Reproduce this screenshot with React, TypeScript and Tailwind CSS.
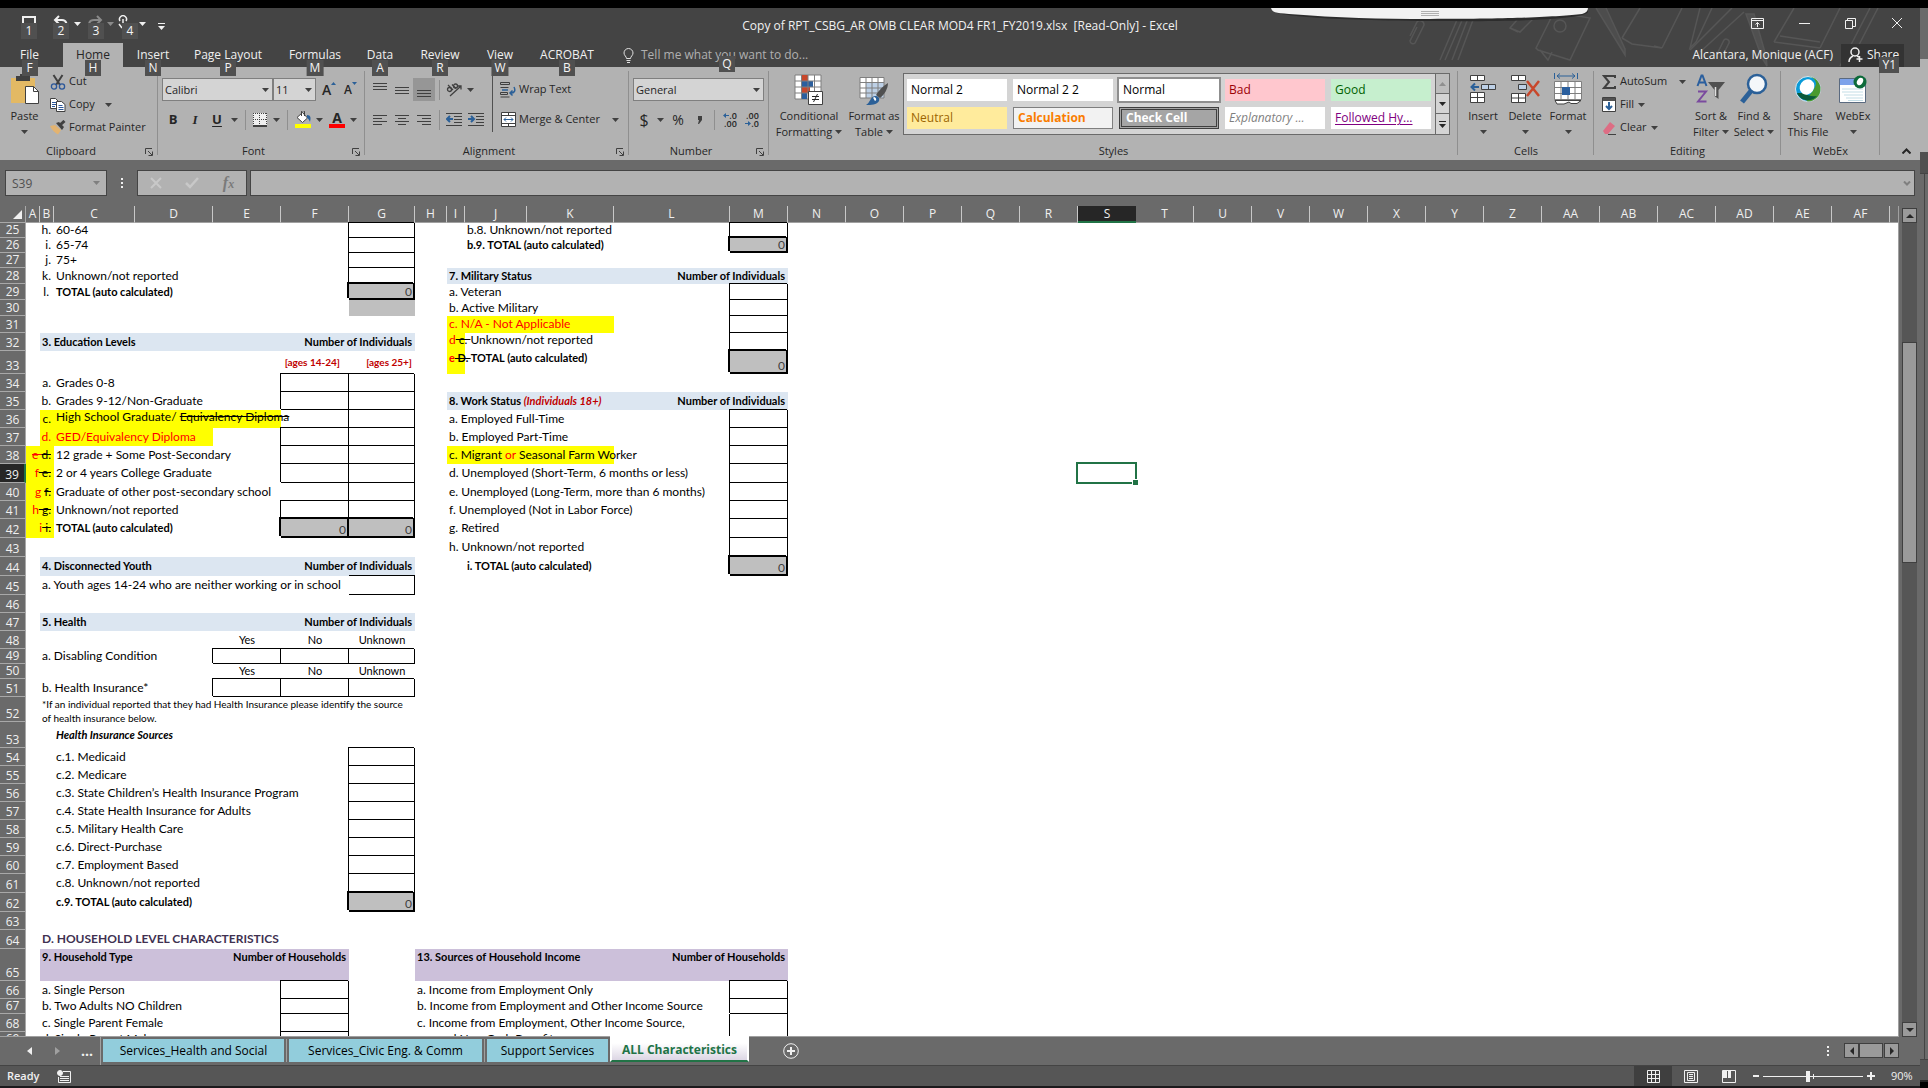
import type { ReactNode } from "react";
import clsx from "clsx";

/* ---------- sheet data ---------- */

type Cell = {
  at: string;
  span?: number;
  text?: ReactNode;
  cls?: string;
};

type Row = { n: number; h: number; cells?: Cell[] };

const columns = [
  { id: "A", w: 14 },
  { id: "B", w: 14 },
  { id: "C", w: 81 },
  { id: "D", w: 78 },
  { id: "E", w: 68 },
  { id: "F", w: 68 },
  { id: "G", w: 66 },
  { id: "H", w: 32 },
  { id: "I", w: 18 },
  { id: "J", w: 62 },
  { id: "K", w: 87 },
  { id: "L", w: 116 },
  { id: "M", w: 58 },
  ...["N", "O", "P", "Q", "R", "S", "T", "U", "V", "W", "X", "Y", "Z", "AA", "AB", "AC", "AD", "AE", "AF"].map((id) => ({ id, w: 58 }))
];

const colIndex = (id: string) => columns.findIndex((c) => c.id === id);

const BOX = "shadow-[-1px_-1px_0_#000,inset_-1px_-1px_0_#000]";
const BOX_OPEN_LEFT = "shadow-[0_-1px_0_#000,inset_-1px_-1px_0_#000]";
const BOX_SIDES = "shadow-[-1px_0_0_#000,inset_-1px_0_0_#000]";
const TOTAL = "bg-[#bfbfbf] text-right align-bottom pr-[3px] text-[#404040] shadow-[-2px_-2px_0_#000,inset_-2px_-2px_0_#000]";
const BLUE = "bg-[#dce6f1] font-bold text-[11px]";
const PURPLE = "bg-[#ccc0da] font-bold text-[11px] align-top pt-px";
const BOLD = "font-bold text-[11px]";
const YELLOW = "bg-[#ffff00]";

const box = (at: string): Cell => ({ at, cls: BOX });
const total = (at: string): Cell => ({ at, cls: TOTAL, text: "0" });
const bullet = (t: ReactNode, cls = ""): Cell => ({ at: "B", text: t, cls: clsx("text-right pr-[3px]", cls) });
const label = (at: string, t: ReactNode, cls = ""): Cell => ({ at, text: t, cls: clsx("pl-[2px]", cls) });
const renumbered = (now: ReactNode, was: string): Cell => ({
  at: "A",
  span: 2,
  cls: clsx("text-right pr-[3px]", YELLOW),
  text: (
    <>
      <span className="text-[#ff0000]">{now}</span>
      <s>{was}</s>
    </>
  )
});

function title(at: string, span: number, t: ReactNode, rightAt: string, right: string, cls = BLUE): Cell[] {
  return [
    { at, span, text: t, cls: clsx("pl-[2px]", cls) },
    { at: rightAt, span: 2, text: right, cls: clsx("text-right pr-[3px]", cls) }
  ];
}

const headings = ["Yes", "No", "Unknown"].map((t, i) => ({ at: "EFG"[i], text: t, cls: "text-center text-[11px]" }));

const rows: Row[] = [
  { n: 25, h: 15, cells: [bullet("h."), label("C", "60-64"), box("G"), label("J", "b.8. Unknown/not reported"), box("M")] },
  { n: 26, h: 15, cells: [bullet("i."), label("C", "65-74"), box("G"), label("J", "b.9. TOTAL (auto calculated)", BOLD), total("M")] },
  { n: 27, h: 15, cells: [bullet("j."), label("C", "75+"), box("G")] },
  { n: 28, h: 16, cells: [bullet("k."), label("C", "Unknown/not reported"), box("G"), ...title("I", 3, "7. Military Status", "L", "Number of Individuals")] },
  { n: 29, h: 16, cells: [bullet("l.", "pr-[5px]"), label("C", "TOTAL (auto calculated)", BOLD), total("G"), label("I", "a. Veteran"), box("M")] },
  { n: 30, h: 16, cells: [{ at: "G", cls: "bg-[#bfbfbf]" }, label("I", "b. Active Military"), box("M")] },
  { n: 31, h: 17, cells: [{ at: "I", span: 3, text: "c. N/A - Not Applicable", cls: clsx("pl-[2px] text-[#ff0000]", YELLOW) }, box("M")] },
  {
    n: 32,
    h: 18,
    cells: [
      ...title("B", 4, "3. Education Levels", "F", "Number of Individuals"),
      label("I", <><span className="text-[#ff0000]">d</span><s> c. </s>Unknown/not reported</>, clsx("align-top", YELLOW)),
      box("M")
    ]
  },
  {
    n: 33,
    h: 23,
    cells: [
      { at: "F", text: "[ages 14-24]", cls: "text-right pr-[9px] font-bold text-[10px] text-[#c00000]" },
      { at: "G", text: "[ages 25+]", cls: "text-right pr-[3px] font-bold text-[10px] text-[#c00000]" },
      label("I", <><span className="text-[#ff0000]">e</span><s> D. </s>TOTAL (auto calculated)</>, clsx("align-top", BOLD, YELLOW)),
      total("M")
    ]
  },
  { n: 34, h: 18, cells: [bullet("a."), label("C", "Grades 0-8"), box("F"), box("G")] },
  {
    n: 35,
    h: 18,
    cells: [
      bullet("b."),
      label("C", "Grades 9-12/Non-Graduate"),
      box("F"),
      box("G"),
      ...title("I", 3, <>8. Work Status <i className="text-[#c00000]">(Individuals 18+)</i></>, "L", "Number of Individuals")
    ]
  },
  {
    n: 36,
    h: 18,
    cells: [
      bullet("c.", YELLOW),
      { at: "C", span: 3, text: <>High School Graduate/ <s>Equivalency Diploma</s></>, cls: clsx("pl-[2px] align-top", YELLOW) },
      box("G"),
      label("I", "a. Employed Full-Time"),
      box("M")
    ]
  },
  {
    n: 37,
    h: 18,
    cells: [
      bullet("d.", clsx("text-[#ff0000]", YELLOW)),
      { at: "C", span: 2, text: "GED/Equivalency Diploma", cls: clsx("pl-[2px] text-[#ff0000]", YELLOW) },
      box("F"),
      box("G"),
      label("I", "b. Employed Part-Time"),
      box("M")
    ]
  },
  {
    n: 38,
    h: 18,
    cells: [
      renumbered(<s>e </s>, "d."),
      label("C", "12 grade + Some Post-Secondary"),
      box("F"),
      box("G"),
      { at: "I", span: 3, text: <>c. Migrant <span className="text-[#ff0000]">or</span> Seasonal Farm Worker</>, cls: clsx("pl-[2px]", YELLOW) },
      box("M")
    ]
  },
  {
    n: 39,
    h: 19,
    cells: [renumbered("f", " e."), label("C", "2 or 4 years College Graduate"), box("F"), box("G"), label("I", "d. Unemployed (Short-Term, 6 months or less)"), box("M"), { at: "S", cls: "relative", text: <Selection /> }]
  },
  { n: 40, h: 18, cells: [renumbered("g ", "f."), label("C", "Graduate of other post-secondary school"), box("G"), label("I", "e. Unemployed (Long-Term, more than 6 months)"), box("M")] },
  { n: 41, h: 18, cells: [renumbered("h", " g."), label("C", "Unknown/not reported"), box("F"), box("G"), label("I", "f. Unemployed (Not in Labor Force)"), box("M")] },
  { n: 42, h: 19, cells: [renumbered("i", " i."), label("C", "TOTAL (auto calculated)", BOLD), total("F"), total("G"), label("I", "g. Retired"), box("M")] },
  { n: 43, h: 19, cells: [label("I", "h. Unknown/not reported"), box("M")] },
  { n: 44, h: 19, cells: [...title("B", 4, "4. Disconnected Youth", "F", "Number of Individuals"), label("J", "i. TOTAL (auto calculated)", BOLD), total("M")] },
  { n: 45, h: 19, cells: [label("B", "a. Youth ages 14-24 who are neither working or in school"), { at: "G", cls: BOX_OPEN_LEFT }] },
  { n: 46, h: 18 },
  { n: 47, h: 18, cells: title("B", 4, "5. Health", "F", "Number of Individuals") },
  { n: 48, h: 18, cells: headings },
  { n: 49, h: 15, cells: [label("B", "a. Disabling Condition"), box("E"), box("F"), box("G")] },
  { n: 50, h: 15, cells: headings },
  { n: 51, h: 18, cells: [label("B", "b. Health Insurance*"), box("E"), box("F"), box("G")] },
  {
    n: 52,
    h: 25,
    cells: [
      {
        at: "B",
        span: 6,
        cls: "align-top pl-[2px] text-[10px]",
        text: (
          <div className="h-6">
            *If an individual reported that they had Health Insurance please identify the source
            <br />
            of health insurance below.
          </div>
        )
      }
    ]
  },
  { n: 53, h: 26, cells: [label("C", "Health Insurance Sources", clsx("italic", BOLD))] },
  ...["c.1. Medicaid", "c.2. Medicare", "c.3. State Children’s Health Insurance Program", "c.4. State Health Insurance for Adults", "c.5. Military Health Care", "c.6. Direct-Purchase", "c.7. Employment Based", "c.8. Unknown/not reported"].map((t, i) => ({
    n: 54 + i,
    h: i === 7 ? 19 : 18,
    cells: [label("C", t), box("G")]
  })),
  { n: 62, h: 19, cells: [label("C", "c.9. TOTAL (auto calculated)", BOLD), total("G")] },
  { n: 63, h: 18 },
  { n: 64, h: 19, cells: [label("B", "D. HOUSEHOLD LEVEL CHARACTERISTICS", "font-bold text-[12px] text-[#403151]")] },
  {
    n: 65,
    h: 32,
    cells: [...title("B", 3, "9. Household Type", "E", "Number of Households", PURPLE), ...title("H", 4, "13. Sources of Household Income", "L", "Number of Households", PURPLE)]
  },
  { n: 66, h: 18, cells: [label("B", "a. Single Person"), box("F"), label("H", "a. Income from Employment Only"), box("M")] },
  { n: 67, h: 15, cells: [label("B", "b. Two Adults NO Children"), box("F"), label("H", "b. Income from Employment and Other Income Source"), box("M")] },
  { n: 68, h: 18, cells: [label("B", "c. Single Parent Female"), box("F"), label("H", "c. Income from Employment, Other Income Source,"), { at: "M", cls: BOX_SIDES }] },
  { n: 69, h: 15, cells: [label("B", "d. Single Parent Male"), box("F"), { at: "H", text: "and Non-Cash Benefits", cls: "pl-[22px]" }, { at: "M", cls: BOX_SIDES }] }
];

function Selection() {
  return (
    <span className="absolute -left-[2px] -top-[2px] -right-px -bottom-px border-2 border-[#217346]">
      <span className="absolute -bottom-[3px] -right-[3px] h-[6px] w-[6px] border-l border-t border-white bg-[#217346]" />
    </span>
  );
}

/* ---------- small parts ---------- */

function Caret({ className = "text-[#404040]" }: { className?: string }) {
  return (
    <svg width="7" height="4" viewBox="0 0 7 4" className={clsx("shrink-0", className)}>
      <path d="M0 0h7L3.5 4z" fill="currentColor" />
    </svg>
  );
}

function KeyTip({ children, className }: { children: ReactNode; className?: string }) {
  return (
    <span className={clsx("absolute z-10 grid h-4 min-w-4 place-items-center bg-[#505050] px-[3px] text-xs leading-4 text-[#f5f5f5]", className)}>
      {children}
    </span>
  );
}

function Launcher() {
  return (
    <button aria-label="More options" className="absolute right-[5px] top-[7px]">
      <svg width="8" height="8" viewBox="0 0 8 8" fill="none" stroke="#404040">
        <path d="M.5 6V.5H7M3 3l4 4M7.5 3.5v4h-4" />
      </svg>
    </button>
  );
}

function Group({ name, width, children, launcher, className }: { name: string; width: string; children: ReactNode; launcher?: boolean; className?: string }) {
  return (
    <section aria-label={name} className={clsx("relative flex shrink-0 flex-col pt-[3px]", width)}>
      <div className={clsx("flex h-[71px]", className)}>{children}</div>
      <div className={clsx("relative h-[19px] text-center leading-5", launcher && "pr-4")}>
        {name}
        {launcher && <Launcher />}
      </div>
      <span className="absolute bottom-[5px] right-0 top-1 w-px bg-[#8f8f8f]" />
    </section>
  );
}

function BigButton({ icon, lines, width, caret }: { icon: ReactNode; lines: string[]; width: string; caret?: boolean }) {
  return (
    <button className={clsx("flex shrink-0 flex-col items-center pt-[3px]", width)}>
      <span className="grid h-8 place-items-center">{icon}</span>
      <span className="mt-[3px] whitespace-nowrap leading-4">{lines[0]}</span>
      <span className="flex h-4 items-center gap-[3px] whitespace-nowrap leading-4">
        {lines[1]}
        {caret && <Caret />}
      </span>
    </button>
  );
}

function SmallButton({ icon, text, caret, gap = "ml-3" }: { icon: ReactNode; text: string; caret?: boolean; gap?: string }) {
  return (
    <button className="flex h-[23px] items-center whitespace-nowrap">
      <span className="grid w-[18px] place-items-center">{icon}</span>
      <span className="ml-[2px]">{text}</span>
      {caret && <span className={gap}><Caret /></span>}
    </button>
  );
}

function IconButton({ label, width, active, children }: { label: string; width: string; active?: boolean; children: ReactNode }) {
  return (
    <button aria-label={label} className={clsx("grid h-[23px] shrink-0 place-items-center", width, active && "bg-[#969696]")}>
      {children}
    </button>
  );
}

const Divider = ({ className = "h-5 bg-[#8f8f8f]" }: { className?: string }) => <span className={clsx("w-px shrink-0", className)} />;

function Lines({ widths, align, y }: { widths: number[]; align: "left" | "center" | "right"; y: number }) {
  return (
    <svg width="14" height="14" viewBox="0 0 14 14" stroke="#404040">
      {widths.map((w, i) => {
        const x = align === "left" ? 0 : align === "center" ? (14 - w) / 2 : 14 - w;
        return <path key={i} d={`M${x} ${y + i * 3 + 0.5}h${w}`} />;
      })}
    </svg>
  );
}

function DropBox({ label, value, width }: { label: string; value: string; width: string }) {
  return (
    <span className={clsx("relative flex h-[23px] items-center border border-[#7f7f7f] bg-[#d4d4d4]", width)}>
      <select aria-label={label} className="h-full w-full appearance-none bg-transparent pl-[2px] leading-4 text-[#262626] outline-none">
        <option>{value}</option>
      </select>
      <span className="pointer-events-none absolute right-[3px]"><Caret /></span>
    </span>
  );
}

/* ---------- icons ---------- */

const PasteIcon = () => (
  <svg width="30" height="30" viewBox="0 0 30 30">
    <path d="M1 4h24v25H1z" fill="#e3b964" />
    <path d="M6 2h4V0h6v2h4v5H6z" fill="#404040" />
    <path d="M15.500 12.500h8l5 5v12h-13z" fill="#fff" stroke="#404040" />
    <path d="M23.500 12.500v5h5" fill="none" stroke="#404040" />
  </svg>
);

const CutIcon = () => (
  <svg width="16" height="16" viewBox="0 0 16 16" fill="none">
    <path d="M3.500 1l6.500 10M12.500 1L6 11" stroke="#404040" strokeWidth="2" />
    <circle cx="4" cy="12.500" r="2.600" stroke="#2b579a" strokeWidth="1.300" />
    <circle cx="12" cy="12.500" r="2.600" stroke="#2b579a" strokeWidth="1.300" />
  </svg>
);

const CopyIcon = () => (
  <svg width="16" height="15" viewBox="0 0 16 15" fill="#fff" stroke="#404040">
    <path d="M.5 1.500h5l3 3v7h-8z" />
    <path d="M2 5.500h4M2 7.500h4M2 9.500h3" stroke="#2b579a" />
    <path d="M6.500 4.500h5l3.500 3v7H6.500z" />
    <path d="M8.500 8.500h4M8.500 10.500h5M8.500 12.500h5" stroke="#2b579a" />
  </svg>
);

const PainterIcon = () => (
  <svg width="16" height="15" viewBox="0 0 16 15">
    <path d="M0 6l5-1 6 5-3 4.500C5 13 2 10 0 6z" fill="#e3b370" />
    <path d="M6 3l3-1 5 5-2 3z" fill="#404040" />
    <path d="M10 5l4.500-4" stroke="#404040" strokeWidth="3" />
  </svg>
);

const BorderIcon = () => (
  <svg width="14" height="14" viewBox="0 0 14 14">
    <path d="M0 0h14v12H0z" fill="#f0f0f0" />
    <path d="M0 .5h14M0 6.500h14M.5 0v12M6.500 0v12M13.500 0v12" stroke="#404040" strokeDasharray="1 1" />
    <path d="M0 13h14" stroke="#404040" strokeWidth="2" />
  </svg>
);

const FillIcon = () => (
  <svg width="17" height="17" viewBox="0 0 17 17">
    <path d="M2 6.500L7.500 1.500l5 5.500-5 4.500z" fill="#fff" stroke="#404040" />
    <path d="M6.500 5V1a1.500 1.500 0 013 0v4" fill="none" stroke="#404040" />
    <path d="M12 4c4 0 4 3 3 7-1-2-1-3-3-4z" fill="#2b6098" />
    <path d="M0 13h16v4H0z" fill="#ff0" />
  </svg>
);

const OrientIcon = () => (
  <svg width="16" height="16" viewBox="0 0 16 16" fill="none" stroke="#404040" strokeWidth="1.300">
    <circle cx="3.500" cy="7.500" r="2" />
    <path d="M2 3l5 5M6 2.500l4 4" />
    <circle cx="9.500" cy="4" r="2" />
    <path d="M4 14L15 4M11.500 4H15v3.500" />
  </svg>
);

const Indent = ({ out }: { out?: boolean }) => (
  <svg width="16" height="13" viewBox="0 0 16 13">
    <path d="M0 .5h16M8 3.500h8M8 6.500h8M8 9.500h8M0 12.500h16" stroke="#404040" />
    <path d={out ? "M7 6H2M4 3L1 6l3 3" : "M0 6h5M3 3l3 3-3 3"} stroke="#2b6098" strokeWidth="2" fill="none" />
  </svg>
);

const WrapIcon = () => (
  <svg width="16" height="16" viewBox="0 0 16 16" fill="none">
    <path d="M.5.5h9v2h-9zM.5 5.500h8M.5 10.500h7v2h-7zM.5 15h9" stroke="#404040" />
    <path d="M2 8h6" stroke="#2b6098" strokeWidth="1.500" />
    <path d="M14 5c2 4 0 6-3 6M12.500 8.500L10 11l2.500 2.500" stroke="#2b6098" strokeWidth="1.500" />
  </svg>
);

const MergeIcon = () => (
  <svg width="15" height="15" viewBox="0 0 15 15" fill="#fff" stroke="#404040">
    <path d="M.5.5h14v14H.5zM.5 3.500h14M.5 11.500h14M7.500.5v3M7.500 11.500v3" />
    <path d="M3 7.500h9M5 5.500l-2 2 2 2M10 5.500l2 2-2 2" stroke="#2b6098" fill="none" />
  </svg>
);

const CondIcon = () => (
  <svg width="30" height="31" viewBox="0 0 30 31">
    <path d="M1 1h26v24H1z" fill="#fff" stroke="#7f7f7f" />
    <path d="M8 1h6v6H8zM8 13h8v6H8z" fill="#c8472b" />
    <path d="M8 7h11v6H8zM8 19h5v6H8z" fill="#2b5f9e" />
    <path d="M1 7h26M1 13h26M1 19h26M7.500 1v24M14 1v24M20.500 1v24" stroke="#7f7f7f" fill="none" />
    <path d="M14.500 17.500h14v13h-14z" fill="#fff" stroke="#404040" />
    <path d="M18 22.500h7M18 25.500h7M23.500 20l-4 8" stroke="#262626" />
  </svg>
);

const TableIcon = () => (
  <svg width="30" height="31" viewBox="0 0 30 31">
    <path d="M1 3h24v21H1z" fill="#fff" />
    <path d="M7 8h18v16H7z" fill="#bdd0e6" />
    <path d="M1 3.500h24V24H1zM1 8.500h24M1 14h24M1 19h24M7 3v21M13 3v21M19 3v21" fill="none" stroke="#7f7f7f" />
    <path d="M29 9c0 6-4 12-8 15l-4-3c3-5 7-9 12-12z" fill="#505050" />
    <path d="M16 22c3 0 5 2 4 5-2 4-8 4-13 4 4-2 4-8 9-9z" fill="#2b6098" />
    <path d="M14.500 24c1.500 0 2 1 1.500 2.500" stroke="#fff" strokeWidth="2" fill="none" />
  </svg>
);

const InsertIcon = () => (
  <svg width="28" height="30" viewBox="0 0 28 30" fill="#fff" stroke="#404040">
    <path d="M1.500 1.500h14v5h-14zM8.500 1.500v5M1.500 18.500h14v10h-14zM8.500 18.500v10M1.500 23.500h14" />
    <path d="M12.500 10.500h14v5h-14zM19.500 10.500v5" fill="#bdd0e6" />
    <path d="M10 13H3M6 9.500L2.500 13 6 16.500" stroke="#2b6098" strokeWidth="2" fill="none" />
  </svg>
);

const DeleteIcon = () => (
  <svg width="30" height="30" viewBox="0 0 30 30" fill="#fff" stroke="#404040">
    <path d="M1.500 1.500h14v5h-14zM8.500 1.500v5M1.500 19.500h14v9h-14zM8.500 19.500v9M1.500 24h14" />
    <path d="M8.500 10.500h8v5h-8z" fill="#bdd0e6" />
    <path d="M17 7l12 15M29 7L17 22" stroke="#c8472b" strokeWidth="2.500" />
  </svg>
);

const FormatIcon = () => (
  <svg width="30" height="32" viewBox="0 0 30 32">
    <path d="M1.500 0v6M24.500 0v6M4 3h18M7 .5L4 3l3 2.500M19 .5L22 3l-3 2.500" stroke="#2b6098" fill="none" />
    <path d="M1.500 8.500h27v18h-27z" fill="#fff" stroke="#7f7f7f" />
    <path d="M1.500 14.500h27M1.500 20.500h27M8 8.500v18M15 8.500v18M22 8.500v18" stroke="#7f7f7f" />
    <path d="M9 14h8v8H9z" fill="#2b5f9e" />
    <path d="M2 27.500h26l-4 3h-6l-2-1.500-5 2H4z" fill="#fff" stroke="#404040" />
  </svg>
);

const SortIcon = () => (
  <svg width="30" height="32" viewBox="0 0 30 32">
    <path d="M1.500 13L5.500 2.500h1L10.500 13M3 9.500h6" stroke="#2b5f9e" strokeWidth="2" fill="none" />
    <path d="M2 18.500h8L2 28.500h8.500" stroke="#7a4a9e" strokeWidth="2" fill="none" />
    <path d="M12 9h17l-6.500 8v9l-4-3v-6z" fill="#505050" />
    <path d="M19.500 14v9" stroke="#e0e0e0" strokeWidth="1.500" />
  </svg>
);

const FindIcon = () => (
  <svg width="28" height="32" viewBox="0 0 28 32">
    <path d="M11 18L2 29" stroke="#2b6098" strokeWidth="5" />
    <circle cx="17" cy="11" r="9" fill="#f4f7fa" stroke="#2b6098" strokeWidth="2.500" />
  </svg>
);

const WebexBall = () => (
  <svg width="28" height="28" viewBox="0 0 28 28">
    <circle cx="14" cy="14" r="12.500" fill="#0a9bd8" stroke="#dfe8ee" />
    <path d="M14 1.500a12.500 12.500 0 010 25C9 25 20 18 22 9c0-4-3-7-8-7.500z" fill="#4a9a2e" />
    <path d="M3 18c3 8 14 10 20 3-6 1-10-1-12-3z" fill="#0a5a3a" />
    <ellipse cx="13" cy="12" rx="7" ry="8" fill="#fff" transform="rotate(35 13 12)" />
  </svg>
);

const WebexWindow = () => (
  <svg width="30" height="29" viewBox="0 0 30 29">
    <path d="M1.500 3.500h26v24h-26z" fill="#fff" stroke="#5a6a80" />
    <path d="M2 4h25v6H2z" fill="#7da2ea" />
    <path d="M4 14h21M4 17h21M6 20h19M8 23h17M10 25.500h15" stroke="#c3dde6" />
    <circle cx="22" cy="7" r="6.500" fill="#0c6b3a" />
    <ellipse cx="22" cy="6.500" rx="2.800" ry="4" fill="#fff" transform="rotate(30 22 6.500)" />
  </svg>
);

/* ---------- window chrome ---------- */

function Doodles() {
  return (
    <svg className="pointer-events-none absolute right-0 top-0 h-[59px] w-[520px]" viewBox="0 0 520 59" fill="none" stroke="#565656" strokeWidth="1.500">
      <path d="M10 28l7-14a4 4 0 017 3l-9 18a3 3 0 01-5-2l7-14" />
      <path d="M40 52L62 0M45 52L66 3M52 52L72 0M58 52L76 4" />
      <path d="M110 20l14-16 10 6-14 14zM118 24l-8-4M124 4l8-4 4 4" />
      <path d="M136 40l18-36 36 6-20 42-32-10zM140 42l8 10 4-8" />
      <circle cx="160" cy="18" r="6" />
      <path d="M196 0l26 42 3 5v-6L206 0" fill="#4d4d4d" />
      <path d="M222 30L240 0M222 30l10 6 30 4M262 40L282 0M262 40l-8-2M300 0l-10 40 6-6L312 0" />
      <path d="M290 42L332 0M300 44L344 4" />
      <path d="M346 6l16 44 5 8-1-10L354 6z" fill="#505050" />
      <path d="M374 34L394 0M374 34l46 6M380 28l40 6M420 40L440 0M440 58L470 0M448 58L478 0" />
      <path d="M318 44l6-12a3 3 0 015 3l-6 12" />
    </svg>
  );
}

function RemoteBar() {
  return (
    <svg className="absolute right-[330px] top-0 z-10" width="320" height="14" viewBox="0 0 320 14">
      <path d="M2 2C4 7 40 12 160 13s156-4 158-9V0H2z" fill="#2c2c2c" />
      <path d="M1 0c1 4 4 5 18 6 50 4 90 5 141 5 100 0 130-3 152-5 4-1 6-3 6-6z" fill="#f2f2f2" />
      <path d="M151 3.500h18M151 5.500h18M151 7.500h18" stroke="#b0b0b0" />
    </svg>
  );
}

const tabs = [
  { name: "File", tip: "F", w: "w-[59px]" },
  { name: "Home", tip: "H", w: "w-[60px] ml-1" },
  { name: "Insert", tip: "N", w: "w-[60px]" },
  { name: "Page Layout", tip: "P", w: "w-[90px]" },
  { name: "Formulas", tip: "M", w: "w-[84px]" },
  { name: "Data", tip: "A", w: "w-[46px]" },
  { name: "Review", tip: "R", w: "w-[74px]" },
  { name: "View", tip: "W", w: "w-[46px]" },
  { name: "ACROBAT", tip: "B", w: "w-[88px]" }
];

function QuickAccess() {
  return (
    <div className="flex h-full items-start pl-[21px] pt-[7px] text-[#f0f0f0]">
      <button aria-label="Save" className="relative w-8">
        <svg width="16" height="14" viewBox="0 0 16 14" fill="none" stroke="currentColor" strokeWidth="2"><path d="M2 12V2h12v10" /></svg>
        <KeyTip className="left-0 top-2">1</KeyTip>
      </button>
      <button aria-label="Undo" className="relative flex w-[35px] gap-[5px]">
        <svg width="16" height="14" viewBox="0 0 16 14" fill="none" stroke="currentColor" strokeWidth="2"><path d="M6 1L2 5l4 4M2 5h7c5 0 5 5 4 8" /></svg>
        <span className="mt-[7px] flex"><Caret className="text-[#f0f0f0]" /></span>
        <KeyTip className="left-0 top-2">2</KeyTip>
      </button>
      <button aria-label="Redo" className="relative flex w-[34px] gap-[3px] text-[#8a8a8a]">
        <svg width="16" height="14" viewBox="0 0 16 14" fill="none" stroke="currentColor" strokeWidth="2"><path d="M9 1l4 4-4 4M13 5H6C1 5 0 9 3 12" /></svg>
        <span className="mt-[7px] flex"><Caret className="text-[#8a8a8a]" /></span>
        <KeyTip className="left-0 top-2 text-[#9a9a9a]">3</KeyTip>
      </button>
      <button aria-label="Touch/Mouse Mode" className="relative flex w-[36px] justify-between">
        <svg width="14" height="14" viewBox="0 0 14 14" fill="none" stroke="currentColor" strokeWidth="1.500" className="-ml-1"><path d="M2 6a3.500 3.500 0 116 0M5 12V4M1 9l3 4" /></svg>
        <span className="mr-3 mt-[7px] flex"><Caret className="text-[#f0f0f0]" /></span>
        <KeyTip className="left-0 top-2">4</KeyTip>
      </button>
      <button aria-label="Customize" className="mt-2">
        <svg width="7" height="7" viewBox="0 0 7 7"><path d="M0 0h7v1H0zM0 3h7L3.500 7z" fill="currentColor" /></svg>
      </button>
    </div>
  );
}

function TitleArea() {
  return (
    <header className="relative bg-[#444444] text-xs text-[#f0f0f0]">
      <Doodles />
      <RemoteBar />
      <div className="relative grid h-[35px] grid-cols-[1fr_auto_1fr] items-center">
        <QuickAccess />
        <h1 className="text-xs">Copy of RPT_CSBG_AR OMB CLEAR MOD4 FR1_FY2019.xlsx&nbsp; [Read-Only] - Excel</h1>
        <div className="flex h-full items-center justify-end gap-[35px] pb-[5px] pr-[17px]">
          <button aria-label="Ribbon display options">
            <svg width="13" height="11" viewBox="0 0 13 11" fill="none" stroke="currentColor"><path d="M.5.500h12v10H.5zM.5 2.500h12M6.500 9V4.500M4.500 6.500l2-2 2 2" /></svg>
          </button>
          <button aria-label="Minimize">
            <svg width="11" height="11" viewBox="0 0 11 11" stroke="currentColor"><path d="M0 5.500h11" /></svg>
          </button>
          <button aria-label="Restore">
            <svg width="11" height="11" viewBox="0 0 11 11" fill="none" stroke="currentColor"><path d="M.5 2.500h7v8h-7zM2.500 2.500v-2h8v8h-3" /></svg>
          </button>
          <button aria-label="Close">
            <svg width="12" height="12" viewBox="0 0 12 12" stroke="currentColor"><path d="M1 1l10 10M11 1L1 11" /></svg>
          </button>
        </div>
      </div>
      <div className="relative flex h-6 items-stretch">
        <nav className="flex">
          {tabs.map((t) => (
            <button key={t.name} className={clsx("relative whitespace-nowrap leading-6", t.w, t.name === "Home" && "bg-[#b2b2b2] text-[#262626]")}>
              {t.name}
              <KeyTip className="left-1/2 top-[17px] -translate-x-1/2">{t.tip}</KeyTip>
            </button>
          ))}
        </nav>
        <button className="relative ml-[12px] flex items-center gap-[7px] text-[#b0b0b0]">
          <svg width="11" height="15" viewBox="0 0 11 15" fill="none" stroke="#e0e0e0"><path d="M3.500 10.500c0-2-2.500-3-2.500-5.500a4.500 4.500 0 019 0c0 2.500-2.500 3.500-2.500 5.500zM3.500 12.500h4M4 14.500h3" /></svg>
          Tell me what you want to do...
          <KeyTip className="left-[96px] top-[13px]">Q</KeyTip>
        </button>
        <div className="ml-auto flex items-center pr-4">
          <span className="mr-[8px]">Alcantara, Monique (ACF)</span>
          <button className="relative flex h-[23px] w-[63px] items-center gap-1 bg-[#333333] pl-[7px]">
            <svg width="15" height="16" viewBox="0 0 15 16" fill="none" stroke="currentColor" strokeWidth="1.500"><circle cx="7" cy="5" r="4" /><path d="M1 15c0-3 2-5 4-6M9 9l2 1M11.500 9v6M8.500 12h6" /></svg>
            Share
            <KeyTip className="right-[5px] top-[13px]">Y1</KeyTip>
          </button>
        </div>
      </div>
    </header>
  );
}

/* ---------- ribbon ---------- */

const styleTiles = [
  { name: "Normal 2", cls: "bg-white text-black" },
  { name: "Normal 2 2", cls: "bg-white text-black" },
  { name: "Normal", cls: "bg-white text-black outline-2 outline-[#8f8f8f]" },
  { name: "Bad", cls: "bg-[#ffc7ce] text-[#9c0006]" },
  { name: "Good", cls: "bg-[#c6efce] text-[#006100]" },
  { name: "Neutral", cls: "bg-[#ffeb9c] text-[#9c6500]" },
  { name: "Calculation", cls: "border border-[#7f7f7f] bg-[#f2f2f2] font-bold text-[#fa7d00]" },
  { name: "Check Cell", cls: "border-3 border-double border-[#3f3f3f] bg-[#a5a5a5] font-bold text-white" },
  { name: "Explanatory ...", cls: "bg-white italic text-[#7f7f7f]" },
  { name: "Followed Hy...", cls: "bg-white text-[#800080] underline underline-offset-2" }
];

function Ribbon() {
  return (
    <div className="flex h-[93px] bg-[#b2b2b2] text-[11px] text-[#262626]">
      <Group name="Clipboard" width="w-[158px]" launcher>
        <BigButton width="w-[49px]" icon={<PasteIcon />} lines={["Paste"]} caret />
        <div>
          <SmallButton icon={<CutIcon />} text="Cut" />
          <SmallButton icon={<CopyIcon />} text="Copy" caret gap="ml-[10px]" />
          <SmallButton icon={<PainterIcon />} text="Format Painter" />
        </div>
      </Group>

      <Group name="Font" width="w-[207px]" launcher className="flex-col pl-1 pt-2">
        <div className="flex items-center">
          <DropBox label="Font" value="Calibri" width="w-[111px]" />
          <DropBox label="Font size" value="11" width="w-[43px]" />
          <button aria-label="Increase font size" className="ml-[6px] flex w-[22px] items-center font-semibold">
            <span className="text-sm leading-4">A</span>
            <svg width="5" height="3" viewBox="0 0 5 3" className="mb-3"><path d="M0 3h5L2.500 0z" fill="#2b6098" /></svg>
          </button>
          <button aria-label="Decrease font size" className="flex items-center font-semibold">
            <span className="text-xs leading-4">A</span>
            <svg width="5" height="3" viewBox="0 0 5 3" className="mb-3"><path d="M0 0h5L2.500 3z" fill="#2b6098" /></svg>
          </button>
        </div>
        <div className="mt-[7px] flex items-center text-[13px]">
          <IconButton label="Bold" width="w-[22px]"><b>B</b></IconButton>
          <IconButton label="Italic" width="w-[22px]"><b className="font-['Liberation_Serif',serif] italic">I</b></IconButton>
          <IconButton label="Underline" width="w-[22px]"><b className="underline underline-offset-2">U</b></IconButton>
          <IconButton label="Underline style" width="w-[13px]"><Caret /></IconButton>
          <Divider className="mx-1 h-5 bg-[#8f8f8f]" />
          <IconButton label="Borders" width="w-[20px]"><BorderIcon /></IconButton>
          <IconButton label="Border style" width="w-[13px]"><Caret /></IconButton>
          <Divider className="mx-1 h-5 bg-[#8f8f8f]" />
          <IconButton label="Fill color" width="w-[22px]"><FillIcon /></IconButton>
          <IconButton label="Fill color list" width="w-[11px]"><Caret /></IconButton>
          <IconButton label="Font color" width="w-[24px]">
            <span className="w-4 border-b-4 border-[#ff0000] text-center text-sm leading-[13px] font-bold">A</span>
          </IconButton>
          <IconButton label="Font color list" width="w-[9px]"><Caret /></IconButton>
        </div>
      </Group>

      <Group name="Alignment" width="w-[264px]" launcher>
        <div className="pl-1 pt-2">
          <div className="flex items-center">
            <IconButton label="Top align" width="w-[22px]"><Lines widths={[14, 14, 14]} align="left" y={0} /></IconButton>
            <IconButton label="Middle align" width="w-[22px]"><Lines widths={[14, 14, 14]} align="left" y={4} /></IconButton>
            <IconButton label="Bottom align" width="w-[22px]" active><Lines widths={[14, 14, 14]} align="left" y={7} /></IconButton>
            <Divider className="ml-[4px] mr-[3px] h-5 bg-[#8f8f8f]" />
            <IconButton label="Orientation" width="w-[22px]"><OrientIcon /></IconButton>
            <IconButton label="Orientation list" width="w-[10px]"><Caret /></IconButton>
          </div>
          <div className="mt-[7px] flex items-center">
            <IconButton label="Align left" width="w-[22px]"><Lines widths={[14, 9, 14, 9]} align="left" y={2} /></IconButton>
            <IconButton label="Center" width="w-[22px]"><Lines widths={[14, 8, 14, 8]} align="center" y={2} /></IconButton>
            <IconButton label="Align right" width="w-[22px]"><Lines widths={[14, 9, 14, 9]} align="right" y={2} /></IconButton>
            <Divider className="ml-[4px] mr-[3px] h-5 bg-[#8f8f8f]" />
            <IconButton label="Decrease indent" width="w-[22px]"><Indent out /></IconButton>
            <IconButton label="Increase indent" width="w-[22px]"><Indent /></IconButton>
          </div>
        </div>
        <Divider className="ml-[5px] mt-[5px] h-[57px] bg-[#505050]" />
        <div className="pl-[6px] pt-2">
          <SmallButton icon={<WrapIcon />} text="Wrap Text" />
          <div className="pt-[7px]"><SmallButton icon={<MergeIcon />} text="Merge & Center" caret /></div>
        </div>
      </Group>

      <Group name="Number" width="w-[140px]" launcher className="flex-col pl-1 pt-2">
        <DropBox label="Number format" value="General" width="w-[131px]" />
        <div className="mt-[7px] flex items-center text-base">
          <IconButton label="Accounting" width="w-[22px]">$</IconButton>
          <IconButton label="Accounting list" width="w-[10px]"><Caret /></IconButton>
          <IconButton label="Percent" width="w-[26px]"><span className="text-sm">%</span></IconButton>
          <IconButton label="Comma" width="w-[18px]"><svg width="6" height="9" viewBox="0 0 6 9"><path d="M1 1h4v4L2 9H1l1-4H1z" fill="#404040" /></svg></IconButton>
          <Divider className="ml-[5px] mr-[4px] h-5 bg-[#8f8f8f]" />
          <IconButton label="Increase decimal" width="w-[22px]">
            <span className="flex flex-col items-end text-[9px] leading-[8px] font-semibold">
              <span className="flex items-center"><svg width="6" height="5" viewBox="0 0 6 5"><path d="M0 2.500L3 0v2h3v1H3v2z" fill="#2b6098" /></svg>.0</span>
              <span>.00</span>
            </span>
          </IconButton>
          <IconButton label="Decrease decimal" width="w-[22px]">
            <span className="flex flex-col items-end text-[9px] leading-[8px] font-semibold">
              <span>.00</span>
              <span className="flex items-center"><svg width="6" height="5" viewBox="0 0 6 5"><path d="M6 2.500L3 0v2H0v1h3v2z" fill="#2b6098" /></svg>.0</span>
            </span>
          </IconButton>
        </div>
      </Group>

      <Group name="Styles" width="min-w-[689px] flex-1" className="pl-1 pr-2">
        <BigButton width="w-[72px]" icon={<CondIcon />} lines={["Conditional", "Formatting"]} caret />
        <BigButton width="w-[58px]" icon={<TableIcon />} lines={["Format as", "Table"]} caret />
        <div className="mt-[3px] flex h-[62px] flex-1 border border-[#6a6a6a] bg-[#d4d4d4]">
          <div className="grid flex-1 grid-cols-5 gap-[6px] py-[5px] pl-[3px] pr-1 text-xs">
            {styleTiles.map((s) => (
              <button key={s.name} className={clsx("flex h-[22px] items-center whitespace-nowrap px-1", s.cls)}>{s.name}</button>
            ))}
          </div>
          <div className="grid w-[14px] grid-rows-3 divide-y divide-[#6a6a6a] border-l border-[#6a6a6a]">
            <button aria-label="Scroll up" className="grid place-items-center bg-[#bdbdbd]"><svg width="7" height="4" viewBox="0 0 7 4"><path d="M0 4h7L3.500 0z" fill="#8f8f8f" /></svg></button>
            <button aria-label="Scroll down" className="grid place-items-center"><Caret className="text-[#262626]" /></button>
            <button aria-label="More styles" className="grid place-items-center"><svg width="7" height="7" viewBox="0 0 7 7"><path d="M0 0h7v1H0zM0 3h7L3.500 7z" fill="#262626" /></svg></button>
          </div>
        </div>
      </Group>

      <Group name="Cells" width="w-[136px]" className="pl-1">
        <BigButton width="w-[42px]" icon={<InsertIcon />} lines={["Insert"]} caret />
        <BigButton width="w-[42px]" icon={<DeleteIcon />} lines={["Delete"]} caret />
        <BigButton width="w-[44px]" icon={<FormatIcon />} lines={["Format"]} caret />
      </Group>

      <Group name="Editing" width="w-[187px]" className="pl-[6px]">
        <div className="w-[89px] shrink-0">
          <SmallButton icon={<svg width="14" height="14" viewBox="0 0 14 14" fill="none" stroke="#404040" strokeWidth="2"><path d="M13 3V1H2l5 6-5 6h11v-2" /></svg>} text="AutoSum" caret />
          <SmallButton icon={<svg width="14" height="15" viewBox="0 0 14 15"><path d="M.5.5h13v14H.5z" fill="#fff" stroke="#404040" /><path d="M1 1h12v3H1z" fill="#505050" /><path d="M7 5v7M4 9l3 3 3-3" stroke="#2b6098" strokeWidth="2" fill="none" /></svg>} text="Fill" caret gap="ml-1" />
          <SmallButton icon={<svg width="14" height="14" viewBox="0 0 14 14"><path d="M1 10l7-9 5 4-7 8H3z" fill="#dd6d84" /><path d="M6 13.500h8" stroke="#404040" /></svg>} text="Clear" caret gap="ml-1" />
        </div>
        <BigButton width="w-[44px]" icon={<SortIcon />} lines={["Sort &", "Filter"]} caret />
        <BigButton width="w-[42px]" icon={<FindIcon />} lines={["Find &", "Select"]} caret />
      </Group>

      <Group name="WebEx" width="w-[99px]" className="pl-[3px]">
        <BigButton width="w-[48px]" icon={<WebexBall />} lines={["Share", "This File"]} />
        <BigButton width="w-[42px]" icon={<WebexWindow />} lines={["WebEx"]} caret />
      </Group>

      <button aria-label="Collapse the ribbon" className="w-10 self-end pb-[6px] pl-[22px]">
        <svg width="9" height="6" viewBox="0 0 9 6" fill="none" stroke="#262626" strokeWidth="2"><path d="M.5 5.500l4-4 4 4" /></svg>
      </button>
    </div>
  );
}

function FormulaBar() {
  return (
    <div className="flex h-[46px] items-start bg-[#6a6a6a] pl-[5px] pr-[5px] pt-[10px]">
      <div className="relative flex h-[26px] w-[102px] items-center border border-[#444] bg-[#b2b2b2]">
        <input aria-label="Name box" defaultValue="S39" className="h-full w-full bg-transparent pl-[6px] text-xs text-[#505050] outline-none" />
        <span className="pointer-events-none absolute right-[6px]"><Caret className="text-[#7f7f7f]" /></span>
      </div>
      <svg width="30" height="26" viewBox="0 0 30 26"><path d="M14 8h2v2h-2zM14 12h2v2h-2zM14 16h2v2h-2z" fill="#f0f0f0" /></svg>
      <div className="flex h-[26px] w-[110px] items-center justify-around border border-[#444] bg-[#b2b2b2] text-[#c8c8c8]">
        <button aria-label="Cancel"><svg width="12" height="12" viewBox="0 0 12 12" stroke="currentColor" strokeWidth="2"><path d="M1 1l10 10M11 1L1 11" /></svg></button>
        <button aria-label="Enter"><svg width="14" height="12" viewBox="0 0 14 12" fill="none" stroke="currentColor" strokeWidth="2.500"><path d="M1 6l4 4 8-9" /></svg></button>
        <button aria-label="Insert function" className="font-['Liberation_Serif',serif] text-base leading-4 font-bold italic text-[#7a7a7a]">f<span className="text-xs">x</span></button>
      </div>
      <div className="relative ml-[3px] flex h-[26px] flex-1 items-center border border-[#444] bg-[#b2b2b2]">
        <input aria-label="Formula bar" className="h-full w-full bg-transparent px-2 text-xs outline-none" />
        <svg width="8" height="5" viewBox="0 0 8 5" fill="none" stroke="#7f7f7f" strokeWidth="2" className="pointer-events-none absolute right-[3px]"><path d="M1 .5l3 3 3-3" /></svg>
      </div>
    </div>
  );
}

/* ---------- grid ---------- */

function SheetRow({ row }: { row: Row }) {
  const out: ReactNode[] = [];
  let next = 0;
  for (const c of row.cells ?? []) {
    const at = colIndex(c.at);
    if (at > next) out.push(<td key={`gap${next}`} colSpan={at - next} />);
    out.push(
      <td key={c.at} colSpan={c.span ?? 1} className={clsx("whitespace-nowrap pb-px", c.cls)}>
        {c.text}
      </td>
    );
    next = at + (c.span ?? 1);
  }
  out.push(<td key="rest" colSpan={columns.length + 1 - next} />);
  return (
    <tr style={{ height: row.h }}>
      <th
        scope="row"
        className={clsx(
          "border-b border-[#a8a8a8] align-bottom font-['Open_Sans',sans-serif] text-xs leading-[14px] font-normal text-[#f0f0f0]",
          row.n === 39 ? "border-r-2 border-r-[#217346] bg-[#262626]" : "border-r border-r-[#a8a8a8] bg-[#6a6a6a]"
        )}
      >
        {row.n}
      </th>
      {out}
    </tr>
  );
}

function Sheet() {
  return (
    <div className="min-w-0 flex-1 overflow-hidden border-b border-r border-[#a0a0a0] bg-white">
      <table className="w-full table-fixed border-separate border-spacing-0 font-[Lato,sans-serif] text-xs leading-[14px] text-black">
        <colgroup>
          <col className="w-[26px]" />
          {columns.map((c) => (
            <col key={c.id} style={{ width: c.w }} />
          ))}
          <col />
        </colgroup>
        <thead className="bg-[#6a6a6a] font-['Open_Sans',sans-serif] text-[#f0f0f0]">
          <tr className="h-[17px]">
            <th className="border-b border-r border-[#a8a8a8] pl-[13px]">
              <svg width="9" height="9" viewBox="0 0 9 9"><path d="M9 0v9H0z" fill="#f0f0f0" /></svg>
            </th>
            {columns.map((c) => (
              <th
                key={c.id}
                scope="col"
                className={clsx("font-normal", c.id === "S" ? "border-b-2 border-[#217346] bg-[#262626]" : "border-b border-r border-b-[#a0a0a0] border-r-[#c8c8c8]")}
              >
                {c.id}
              </th>
            ))}
            <th className="border-b border-[#a0a0a0]" />
          </tr>
        </thead>
        <tbody>
          {rows.map((r) => (
            <SheetRow key={r.n} row={r} />
          ))}
        </tbody>
      </table>
    </div>
  );
}

function ScrollButton({ label, d }: { label: string; d: string }) {
  return (
    <button aria-label={label} className="grid h-[15px] w-[15px] shrink-0 place-items-center border border-[#3f3f3f] bg-[#9a9a9a]">
      <svg width="8" height="8" viewBox="0 0 8 8"><path d={d} fill="#262626" /></svg>
    </button>
  );
}

function VerticalScroll() {
  return (
    <div className="flex w-[21px] flex-col items-center bg-[#6a6a6a] pt-[2px]">
      <ScrollButton label="Scroll up" d="M0 6h8L4 2z" />
      <div className="flex w-[15px] flex-1 flex-col bg-[#565656]">
        <div className="flex-[119]" />
        <div className="flex-[220] border border-[#3f3f3f] bg-[#9a9a9a]" />
        <div className="flex-[460]" />
      </div>
      <ScrollButton label="Scroll down" d="M0 2h8L4 6z" />
    </div>
  );
}

function SheetTabs() {
  return (
    <div className="flex h-[28px] bg-[#6a6a6a] pr-[21px] text-xs text-black">
      <div className="flex w-[101px] items-center border-r border-[#a0a0a0] pl-[27px] text-[#f0f0f0]">
        <button aria-label="Previous sheet"><svg width="6" height="8" viewBox="0 0 6 8"><path d="M5 0v8L0 4z" fill="#f0f0f0" /></svg></button>
        <button aria-label="Next sheet" className="ml-[22px]"><svg width="6" height="8" viewBox="0 0 6 8"><path d="M0 0v8l5-4z" fill="#a0a0a0" /></svg></button>
        <button className="ml-5 text-sm leading-4 font-bold">...</button>
      </div>
      <div className="flex items-start">
        <button className="ml-[2px] mt-[2px] h-[23px] w-[181px] bg-[#92cddc]">Services_Health and Social</button>
        <Divider className="ml-[2px] mt-[2px] h-[23px] bg-[#a0a0a0]" />
        <button className="ml-[2px] mt-[2px] h-[23px] w-[193px] bg-[#92cddc]">Services_Civic Eng. &amp; Comm</button>
        <Divider className="ml-[2px] mt-[2px] h-[23px] bg-[#a0a0a0]" />
        <button className="ml-[2px] mt-[2px] h-[23px] w-[121px] bg-[#92cddc]">Support Services</button>
        <button className="-mt-px ml-[2px] h-[26px] w-[139px] border-x-2 border-b-2 border-x-white border-b-[#217346] bg-linear-to-b from-white from-30% to-[#dcd6e4] pt-[3px] font-bold text-[#217346]">ALL Characteristics</button>
        <button aria-label="New sheet" className="ml-[34px] mt-[6px]">
          <svg width="16" height="16" viewBox="0 0 16 16" fill="none" stroke="#f0f0f0"><circle cx="8" cy="8" r="7.300" /><path d="M8 4v8M4 8h8" strokeWidth="2" /></svg>
        </button>
      </div>
      <div className="ml-auto flex items-start pt-[6px]">
        <svg width="2" height="15" viewBox="0 0 2 15" className="mr-[15px]"><path d="M0 3h2v2H0zM0 7h2v2H0zM0 11h2v2H0z" fill="#f0f0f0" /></svg>
        <ScrollButton label="Scroll left" d="M6 0v8L2 4z" />
        <span className="mr-px h-[15px] w-6 border border-[#3f3f3f] bg-[#9a9a9a]" />
        <ScrollButton label="Scroll right" d="M2 0v8l4-4z" />
      </div>
    </div>
  );
}

function StatusBar() {
  return (
    <footer className="flex h-[21px] items-center border-t border-[#444] bg-[#565656] pl-[7px] pr-[5px] text-[11px] text-[#f0f0f0]">
      <span className="font-semibold">Ready</span>
      <button aria-label="Record macro" className="ml-[18px]">
        <svg width="14" height="13" viewBox="0 0 14 13" fill="none" stroke="#f0f0f0"><path d="M6 1.500h7.500v11H1.500V7M3 6.500h9M3 8.500h9M3 10.500h9" /><circle cx="3" cy="3" r="2.500" fill="#f0f0f0" /></svg>
      </button>
      <div className="ml-auto flex h-full items-center">
        <button aria-label="Normal view" className="grid h-full w-[38px] place-items-center bg-[#3f3f3f]">
          <svg width="13" height="13" viewBox="0 0 13 13" fill="none" stroke="#f0f0f0"><path d="M.5.5h12v12H.5zM.5 4.500h12M.5 8.500h12M4.500.5v12M8.500.5v12" /></svg>
        </button>
        <button aria-label="Page layout" className="grid h-full w-[38px] place-items-center">
          <svg width="14" height="13" viewBox="0 0 14 13" fill="none" stroke="#f0f0f0"><path d="M.5.5h13v12H.5zM3.500 2.500h7v8h-7zM5 4.500h4M5 6.500h4M5 8.500h4" /></svg>
        </button>
        <button aria-label="Page break preview" className="grid h-full w-[38px] place-items-center">
          <svg width="14" height="13" viewBox="0 0 14 13" fill="none" stroke="#f0f0f0"><path d="M.5.5h13v12H.5z" /><path d="M1 1h4v7H1zM6 1h3v7H6z" fill="#f0f0f0" stroke="none" /></svg>
        </button>
        <button aria-label="Zoom out" className="ml-[5px] h-[2px] w-[6px] bg-[#f0f0f0]" />
        <input
          type="range"
          aria-label="Zoom"
          min={0}
          max={100}
          defaultValue={45}
          className="mx-1 h-[11px] w-[100px] appearance-none bg-[linear-gradient(#f0f0f0,#f0f0f0),linear-gradient(#f0f0f0,#f0f0f0)] bg-[length:100%_1px,1px_5px] bg-center bg-no-repeat [&::-webkit-slider-thumb]:h-[11px] [&::-webkit-slider-thumb]:w-1 [&::-webkit-slider-thumb]:appearance-none [&::-webkit-slider-thumb]:bg-[#f0f0f0]"
        />
        <button aria-label="Zoom in"><svg width="8" height="8" viewBox="0 0 8 8" stroke="#f0f0f0" strokeWidth="2"><path d="M4 0v8M0 4h8" /></svg></button>
        <span className="ml-4 w-6">90%</span>
      </div>
    </footer>
  );
}

/* sliver of the window that sits behind this one */
function BackWindowEdge() {
  return (
    <div className="flex w-2 shrink-0 flex-col bg-[#6a6a6a]">
      <div className="h-[51px]" />
      <div className="h-[93px] bg-[#b2b2b2]" />
      <div className="h-[22px] border-b border-[#444] bg-[#505050]" />
      <div className="ml-1 flex-1 border-l border-[#444]" />
      <div className="h-[21px] border-t border-[#444] bg-[#565656]" />
      <div className="h-2 border-t-2 border-[#262626] bg-black" />
    </div>
  );
}

export default function App() {
  return (
    <div className="flex h-screen flex-col overflow-hidden bg-black pt-2 font-['Open_Sans',sans-serif]">
      <div className="flex min-h-0 flex-1">
        <main className="flex min-w-0 flex-1 flex-col">
          <TitleArea />
          <Ribbon />
          <FormulaBar />
          <div className="flex min-h-0 flex-1 bg-[#6a6a6a]">
            <Sheet />
            <VerticalScroll />
          </div>
          <SheetTabs />
          <StatusBar />
          <div className="h-[2px] bg-[#1c1a1c]" />
        </main>
        <BackWindowEdge />
      </div>
    </div>
  );
}
